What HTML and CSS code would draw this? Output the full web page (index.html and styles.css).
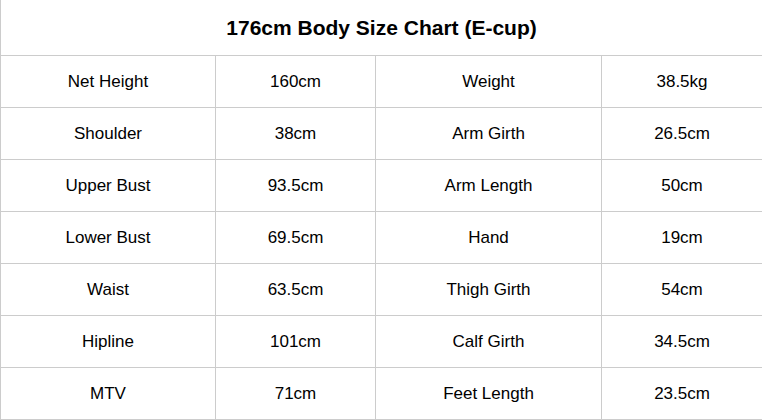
FILE: index.html
```html
<!DOCTYPE html>
<html>
<head>
<meta charset="utf-8">
<link rel="stylesheet" href="styles.css">
</head>
<body>
<div class="chart">
  <div class="title">176cm Body Size Chart (E-cup)</div>
  <div class="cell">Net Height</div><div class="cell">160cm</div><div class="cell">Weight</div><div class="cell last">38.5kg</div>
  <div class="cell">Shoulder</div><div class="cell">38cm</div><div class="cell">Arm Girth</div><div class="cell last">26.5cm</div>
  <div class="cell">Upper Bust</div><div class="cell">93.5cm</div><div class="cell">Arm Length</div><div class="cell last">50cm</div>
  <div class="cell">Lower Bust</div><div class="cell">69.5cm</div><div class="cell">Hand</div><div class="cell last">19cm</div>
  <div class="cell">Waist</div><div class="cell">63.5cm</div><div class="cell">Thigh Girth</div><div class="cell last">54cm</div>
  <div class="cell">Hipline</div><div class="cell">101cm</div><div class="cell">Calf Girth</div><div class="cell last">34.5cm</div>
  <div class="cell">MTV</div><div class="cell">71cm</div><div class="cell">Feet Length</div><div class="cell last">23.5cm</div>
</div>
</body>
</html>
```
FILE: styles.css
```css
html, body {
  margin: 0;
  padding: 0;
  background: #fff;
}
.chart {
  width: 762px;
  box-sizing: border-box;
  border-left: 1px solid #cccccc;
  display: grid;
  grid-template-columns: 215px 160px 226px 160px;
  grid-template-rows: 56px repeat(7, 52px);
  font-family: "Liberation Sans", Arial, sans-serif;
  color: #000;
}
.title {
  grid-column: 1 / -1;
  box-sizing: border-box;
  border-bottom: 1px solid #cccccc;
  display: flex;
  align-items: center;
  justify-content: center;
  font-weight: bold;
  font-size: 21px;
}
.cell {
  box-sizing: border-box;
  border-right: 1px solid #cccccc;
  border-bottom: 1px solid #cccccc;
  display: flex;
  align-items: center;
  justify-content: center;
  font-size: 17px;
}
.cell.last {
  border-right: none;
}
```
